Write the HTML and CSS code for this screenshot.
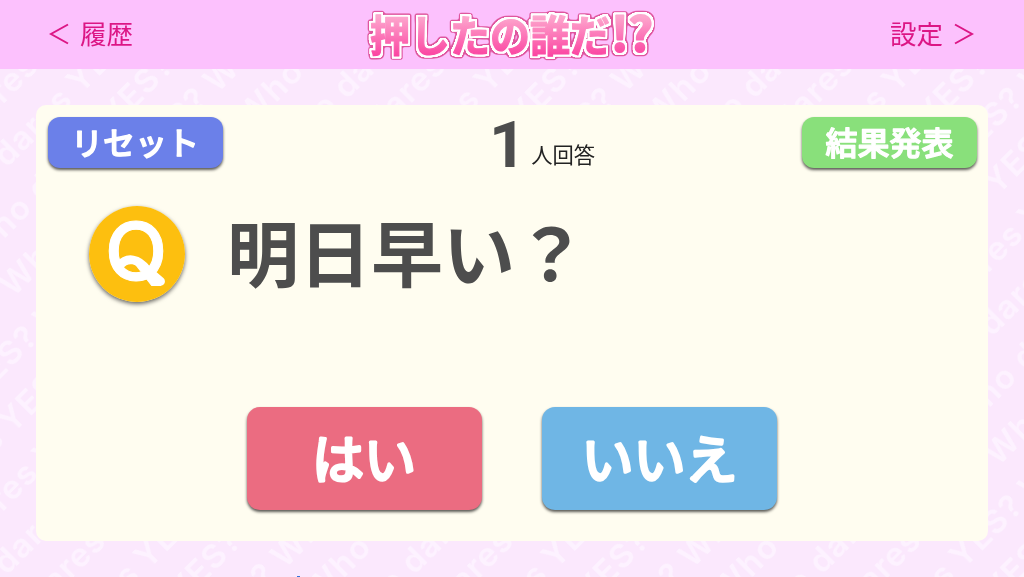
FILE: index.html
```
<!DOCTYPE html>
<html lang="ja">
<head>
    <meta charset="UTF-8">
    <meta name="viewport" content="width=device-width, initial-scale=1.0">
    <title>押したの誰だ!?</title>
    <link rel="stylesheet" href="styles.css">
</head>
<body>

    <!-- Background pattern -->
    <svg class="pattern" width="1024" height="577" aria-hidden="true">
        <defs>
            <pattern id="words" width="288.5" height="48" patternUnits="userSpaceOnUse" patternTransform="translate(119 550) rotate(-45)">
                <text class="pattern-text" x="6" y="35" textLength="279">YES? Who dares</text>
            </pattern>
        </defs>
        <rect width="1024" height="577" fill="url(#words)"/>
    </svg>

    <!-- Header -->
    <header class="header">
        <a class="nav-link">
            <svg class="arrow" viewBox="0 0 20 22"><path d="M19 1.5 L2 11 L19 20.5"/></svg>
            <span>履歴</span>
        </a>
        <svg class="logo" width="300" height="60" viewBox="0 0 300 60">
            <defs>
                <linearGradient id="pink" gradientUnits="userSpaceOnUse" x1="0" y1="12" x2="0" y2="53">
                    <stop offset="0" stop-color="#fda6cd"/>
                    <stop offset="1" stop-color="#fb3f9f"/>
                </linearGradient>
                <!-- white ring, then a darker pink ring around it -->
                <filter id="outline" filterUnits="userSpaceOnUse" x="-10" y="-10" width="320" height="80" color-interpolation-filters="sRGB">
                    <feMorphology in="SourceAlpha" operator="dilate" radius="2" result="ring1"/>
                    <feGaussianBlur in="ring1" stdDeviation="0.7" result="soft1"/>
                    <feComponentTransfer in="soft1" result="white1"><feFuncA type="linear" slope="3" intercept="-0.7"/></feComponentTransfer>
                    <feFlood flood-color="#fff"/>
                    <feComposite in2="white1" operator="in" result="white"/>
                    <feMorphology in="SourceAlpha" operator="dilate" radius="3.4" result="ring2"/>
                    <feGaussianBlur in="ring2" stdDeviation="0.9" result="soft2"/>
                    <feComponentTransfer in="soft2" result="pink2"><feFuncA type="linear" slope="3" intercept="-0.7"/></feComponentTransfer>
                    <feFlood flood-color="#df569f"/>
                    <feComposite in2="pink2" operator="in" result="pinkring"/>
                    <feMerge>
                        <feMergeNode in="pinkring"/>
                        <feMergeNode in="white"/>
                        <feMergeNode in="SourceGraphic"/>
                    </feMerge>
                </filter>
            </defs>
            <g class="logo-text" filter="url(#outline)">
                <text x="8" y="47" textLength="240" lengthAdjust="spacingAndGlyphs">押したの誰だ</text>
                <text class="marks" x="249" y="46" textLength="42" lengthAdjust="spacingAndGlyphs">!?</text>
            </g>
        </svg>
        <a class="nav-link nav-right">
            <span>設定</span>
            <svg class="arrow" viewBox="0 0 20 22"><path d="M1 1.5 L18 11 L1 20.5"/></svg>
        </a>
    </header>

    <!-- Question card -->
    <main class="card">
        <div class="card-top">
            <button class="btn small reset">
                <svg width="175" height="51"><text x="87" y="37.5" text-anchor="middle">リセット</text></svg>
            </button>
            <p class="count"><span class="num">1</span><span class="unit">人回答</span></p>
            <button class="btn small result">
                <svg width="175" height="51"><text x="87.5" y="37.5" text-anchor="middle">結果発表</text></svg>
            </button>
        </div>

        <div class="question">
            <svg class="q-mark" width="96" height="96" viewBox="0 0 98 98">
                <circle cx="49" cy="49" r="49" fill="#fdbf0f"/>
                <text x="48" y="76" text-anchor="middle" textLength="64" lengthAdjust="spacingAndGlyphs">Q</text>
                <path d="M31 61 C39 51 51 54 59 65 L73 77"/>
            </svg>
            <h1>明日早い？</h1>
        </div>

        <div class="answers">
            <button class="btn large yes">
                <svg width="235" height="103"><text x="117" y="72" text-anchor="middle">はい</text></svg>
            </button>
            <button class="btn large no">
                <svg width="235" height="103"><text x="117.5" y="72" text-anchor="middle">いいえ</text></svg>
            </button>
        </div>
    </main>

    <div class="edge-mark"></div>

</body>
</html>
```
FILE: styles.css
```
* {
    margin: 0;
    padding: 0;
    box-sizing: border-box;
}

body {
    height: 577px;
    overflow: hidden;
    background: #fbe8fd;
    font-family: "Noto Sans CJK JP", sans-serif;
}

/* Diagonal words behind everything */
.pattern {
    position: fixed;
    top: 0;
    left: 0;
    z-index: -1;
}

.pattern-text {
    font-family: Inter, sans-serif;
    font-size: 33px;
    font-weight: 600;
    fill: #fdf2ff;
}

/* Header bar */
.header {
    display: grid;
    grid-template-columns: 1fr 300px 1fr;
    align-items: center;
    height: 69px;
    padding: 0 50px 0 49px;
    background: #fcc1fd;
}

.nav-link {
    display: flex;
    align-items: center;
    gap: 11px;
    height: 67px;
    margin-bottom: 2px;
    color: #dc1685;
    font-size: 26.5px;
    line-height: 66px;
}

.nav-link span {
    height: 67px;
}

.nav-right {
    justify-content: flex-end;
}

.arrow {
    width: 20px;
    height: 22px;
    fill: none;
    stroke: #dc1685;
    stroke-width: 2;
}

.logo {
    overflow: visible;
}

.logo-text {
    font-size: 43px;
    font-weight: bold;
    fill: url(#pink);
    stroke: url(#pink);
    stroke-width: 1.2;
    stroke-linejoin: round;
}

.logo-text .marks {
    font-size: 47px;
    stroke-width: 2;
}

/* White card */
.card {
    width: 952px;
    height: 436px;
    margin: 36px 0 0 36px;
    padding: 12px 11px 0 12px;
    background: #fffdf0;
    border-radius: 10px;
}

.card-top {
    display: flex;
    justify-content: space-between;
    height: 52px;
}

.btn {
    border: none;
    box-shadow: 0 2px 3px rgba(0, 0, 0, 0.65);
}

.btn svg {
    display: block;
}

/* Round line joins soften the corners of the letters */
.btn text {
    fill: #fff;
    stroke: #fff;
    stroke-linejoin: round;
    font-family: "Noto Sans CJK JP", sans-serif;
    font-weight: 500;
}

.small {
    width: 175px;
    height: 51px;
    border-radius: 12px;
}

.small text {
    font-size: 32px;
    stroke-width: 1.3;
}

.reset {
    background: #6b80e9;
}

.result {
    background: #89e07b;
}

.count {
    display: flex;
    align-items: baseline;
    gap: 5px;
    height: 52px;
    padding-left: 59px;
}

.num {
    color: #4d4d4d;
    font-family: Roboto, sans-serif;
    font-size: 65px;
    font-weight: bold;
    line-height: 57px;
}

.unit {
    height: 34px;
    color: #222;
    font-size: 21.3px;
    line-height: 30px;
    padding-bottom: 4px;
    transform: translateY(-4px);
}

/* Question row */
.question {
    display: flex;
    align-items: center;
    gap: 42px;
    margin-top: 36px;
    padding-left: 41px;
}

.q-mark {
    overflow: visible;
    border-radius: 50%;
    box-shadow: 0 2px 4px rgba(0, 0, 0, 0.6);
}

.q-mark text {
    font-family: Inter, sans-serif;
    font-size: 82px;
    font-weight: 500;
    fill: #fff;
    stroke: #fff;
    stroke-width: 1;
    stroke-linejoin: round;
}

.q-mark path {
    fill: none;
    stroke: #fff;
    stroke-width: 9;
    stroke-linecap: round;
}

.question h1 {
    height: 98px;
    color: #4d4d4d;
    font-size: 72px;
    font-weight: bold;
    line-height: 89px;
}

/* Answer buttons */
.answers {
    display: flex;
    gap: 60px;
    margin-top: 104px;
    padding-left: 199px;
}

.large {
    width: 235px;
    height: 103px;
    border-radius: 13px;
}

.large text {
    font-size: 52px;
    font-weight: 400;
    stroke-width: 3.4;
}

.yes {
    background: #eb6c81;
}

.no {
    background: #6fb6e5;
}

/* Tip of the mark peeking in at the bottom edge */
.edge-mark {
    position: fixed;
    left: 297px;
    bottom: 0;
    width: 3px;
    height: 1px;
    background: #3573dc;
}
```
